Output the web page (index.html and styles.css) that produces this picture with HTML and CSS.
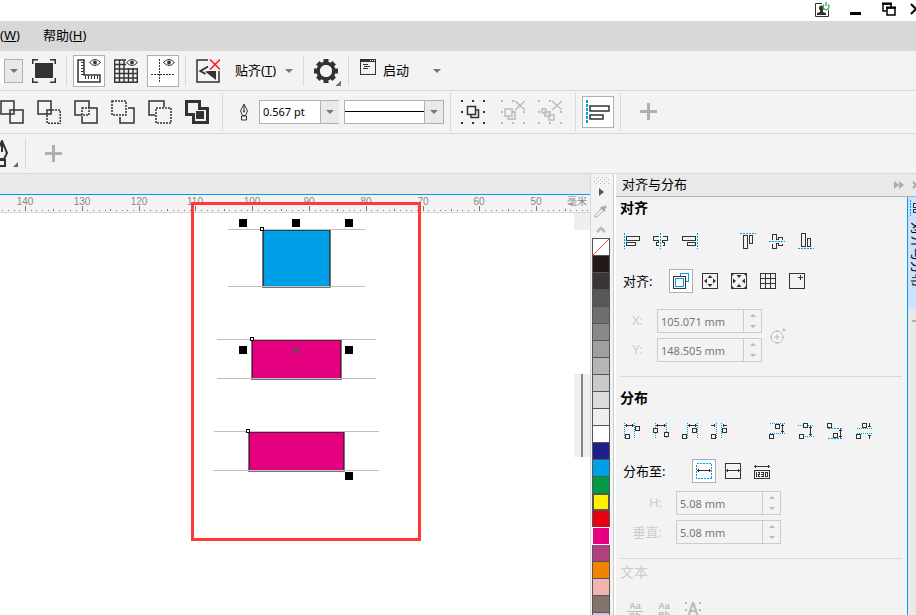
FILE: index.html
```html
<!DOCTYPE html>
<html lang="zh-CN">
    <head>
        <meta charset="utf-8">
        <title>对齐与分布</title>
        <link rel="stylesheet" href="styles.css">
    </head>
    <body>
        <header class="titlebar">
            <button class="win" aria-label="登录"><svg width="16" height="16" viewBox="0 0 16 16"><path d="M8 1.500H1.500v13h13V8" fill="none" stroke="#333"/><path d="M3 13v-2l3-1V8a2 2 0 0 1-1-2 2.500 2.500 0 0 1 5 0 2 2 0 0 1-1 2v2l3 1v2z" fill="#333"/><path d="M10 2.500a3 3 0 1 0 4 0M12 0v4" fill="none" stroke="#2eb35a" stroke-width="1.400"/></svg></button>
            <button class="win" aria-label="最小化"><svg width="16" height="16"><path d="M3 11.500h11" stroke="#000" stroke-width="3" shape-rendering="crispEdges"/></svg></button>
            <button class="win" aria-label="还原"><svg width="16" height="16" fill="#fff" stroke="#000" stroke-width="1.500"><path d="M3 2h8v7H3z"/><path d="M7 6h8v7H7z"/><path d="M2 1.500h10M6 5.500h10" stroke-width="2"/></svg></button>
            <button class="win" aria-label="关闭"><svg width="16" height="16"><path d="M3 2l10 10M13 2L3 12" stroke="#000" stroke-width="2"/></svg></button>
        </header>

        <nav class="menubar">
            <a href="#window">(<u>W</u>)</a>
            <a href="#help">帮助(<u>H</u>)</a>
        </nav>

        <div class="toolbar standard">
            <button class="drop edge" aria-label="缩放级别"><i class="caret"></i></button>
            <button class="tool" aria-label="全屏预览"><svg width="24" height="24" fill="none" stroke="#333"><path d="M.5 5V.5H6M18 .5h5.500V5M.5 19v4.500H6M18 23.500h5.500V19" stroke-width="2"/><path d="M3 4h18v15H3z" fill="#333" stroke="none"/></svg></button>
            <span class="sep"></span>
            <button class="tool on" aria-label="标尺"><svg width="24" height="24" fill="none" stroke="#333"><path d="M1 1h6v15h16v7H1z" stroke-width="1.500"/><path d="M4 3.500h3M4 6.500h3M4 9.500h3M4 12.500h3M4 15.500h3M8.500 17v3M11.500 17v3M14.500 17v3M17.500 17v3M20.500 17v3"/><path d="M12.500 3.500q5.500-6 11 0-5.500 6-11 0z"/><circle cx="18" cy="3.500" r="1.500" fill="#333"/></svg></button>
            <button class="tool" aria-label="网格"><svg width="24" height="24" fill="none" stroke="#333"><path d="M.7 1v22.500M5.500 1v22.500M10 1v22.500M14.500 9v14.500M19 9v14.500M23.300 9v14.500M0 1h12M0 5.500h12M0 10h24M0 14.500h24M0 19h24M0 23.300h24" stroke-width="1.400"/><path d="M12.500 3.500q5.500-6 11 0-5.500 6-11 0z" fill="#f3f3f3"/><circle cx="18" cy="3.500" r="1.500" fill="#333"/></svg></button>
            <button class="tool on" aria-label="辅助线"><svg width="24" height="24" fill="none" stroke="#333"><path d="M8.500 0v24M0 15.500h24" stroke-dasharray="2 1" shape-rendering="crispEdges"/><path d="M12.500 3.500q5.500-6 11 0-5.500 6-11 0z"/><circle cx="18" cy="3.500" r="1.500" fill="#333"/></svg></button>
            <span class="sep"></span>
            <button class="tool" aria-label="关闭贴齐"><svg width="24" height="24" fill="none" stroke="#333"><path d="M12 1H1v22h22V12" stroke-width="1.500"/><path d="M12 7.500L4.500 12l5 3" stroke-width="2"/><path d="M9 12.500l5-.5h6v9z" fill="#333" stroke="none"/><path d="M14 .5l10 10M24 .5l-10 10" stroke="#f22" stroke-width="1.600"/></svg></button>
            <button class="text-tool">贴齐(<u>T</u>)<i class="caret"></i></button>
            <span class="sep"></span>
            <button class="tool flyout" aria-label="选项"><svg width="24" height="24" viewBox="-12 -12 24 24"><circle r="7.800" fill="none" stroke="#333" stroke-width="3.500"/><path d="M0-8v-4M0 8v4M-8 0h-4M8 0h4M5.700-5.700l2.500-2.500M5.700 5.700l2.500 2.500M-5.700-5.700l-2.500-2.500M-5.700 5.700l-2.500 2.500" stroke="#333" stroke-width="5"/><circle r="6" fill="#f3f3f3"/></svg></button>
            <span class="sep"></span>
            <button class="text-tool launch"><svg width="16" height="16" fill="none" stroke="#333" shape-rendering="crispEdges"><path d="M.5.5h15v15H.5z"/><path d="M0 1.500h16" stroke-width="3"/><path d="M10 1.500h1M12 1.500h1M14 1.500h1" stroke="#fff"/><path d="M3 5.500h5M4 7.500h6M3 9.500h5"/></svg>启动<i class="caret"></i></button>
        </div>

        <div class="toolbar shaping">
            <button class="tool" aria-label="焊接"><svg width="24" height="24" fill="#f3f3f3" stroke="#333" stroke-width="1.500"><path d="M1 1h13v13H1zM10 10h13v13H10z"/></svg></button>
            <button class="tool" aria-label="修剪"><svg width="24" height="24" fill="none" stroke="#333" stroke-width="1.500"><path d="M14 10V1H1v13h9"/><path d="M10 10h4v4h-4z"/><path d="M15 10h9M23.300 11v13M10 15v9M11 23.300h12" stroke-dasharray="2 1"/></svg></button>
            <button class="tool" aria-label="相交"><svg width="24" height="24" fill="none" stroke="#333" stroke-width="1.500"><path d="M15 8V1H1v14h7"/><path d="M16 8h7v15H8v-7"/><path d="M8 8h7v7H8z" stroke-dasharray="2 1"/></svg></button>
            <button class="tool" aria-label="简化"><svg width="24" height="24" fill="none" stroke="#333" stroke-width="1.500"><path d="M1 1h14v14H1z" stroke-dasharray="2 1"/><path d="M17 8h6v15H9v-6"/></svg></button>
            <button class="tool" aria-label="移除后面对象"><svg width="24" height="24" fill="none" stroke="#333" stroke-width="1.500"><path d="M16 7V1H1v14h6"/><path d="M8 8h15v15H8z" stroke-dasharray="2 1"/></svg></button>
            <button class="tool" aria-label="创建边界"><svg width="24" height="24" fill="none" stroke="#333" stroke-width="3"><path d="M1.500 1.500h13v7h8v14h-14v-8h-7z"/><path d="M11 11h8v8h-8z" fill="#333" stroke="none"/></svg></button>
            <span class="sep tall after-shapes"></span>
            <label class="pen" for="outline-width" title="轮廓宽度"><svg width="10" height="18" fill="none" stroke="#333"><path d="M5 1L1.500 8l2 4.500h3l2-4.500zM5 2v6M2.500 13h5v4h-5z"/><circle cx="5" cy="8.500" r=".7"/></svg></label>
            <div class="combo">
                <input id="outline-width" type="text" value="0.567 pt">
                <button class="drop" aria-label="轮廓宽度列表"><i class="caret"></i></button>
            </div>
            <div class="combo line-style">
                <select aria-label="线条样式"><option></option></select>
                <span class="drop"><i class="caret"></i></span>
            </div>
            <span class="sep tall"></span>
            <button class="tool" aria-label="组合对象"><svg width="24" height="24" fill="none" stroke="#333"><path d="M0 1h24M0 12h24M0 23h24" stroke-width="2" stroke-dasharray="2 9"/><path d="M10 10v7.500h7.500V10z" stroke-width="1.500"/><path d="M6.500 6.500h8v8h-8z" fill="#f3f3f3" stroke-width="1.500"/></svg></button>
            <button class="tool ungroup" aria-label="取消组合对象" disabled><svg width="24" height="24" fill="none" stroke="#bbb"><path d="M0 1h13M0 12h24M0 23h24" stroke-width="2" stroke-dasharray="2 9"/><path d="M7 12v7h7v-7z" stroke-width="1.500"/><path d="M4 9h7v7H4z" fill="#f3f3f3" stroke-width="1.500"/><path d="M14 1l10 9M24 1l-10 9" stroke-width="1.500"/></svg></button>
            <button class="tool" aria-label="取消组合所有对象" disabled><svg width="24" height="24" fill="#f3f3f3" stroke="#bbb"><path d="M0 1h13M0 12h24M0 23h24" stroke-width="2" stroke-dasharray="2 9"/><path d="M4 9h4v4H4zM7 12h5v4H7zM11 15h5v5h-5z" stroke-width="1.500"/><path d="M14 1l10 9M24 1l-10 9" stroke-width="1.500"/></svg></button>
            <span class="sep tall wide"></span>
            <button class="tool on" aria-label="对齐与分布"><svg width="24" height="24" fill="none" stroke="#333" stroke-width="2"><path d="M1 0v24" stroke="#00a0e9" stroke-dasharray="3 1" shape-rendering="crispEdges"/><path d="M4 6h19v5H4zM4 15h13v4H4z" stroke-width="1.500"/></svg></button>
            <span class="sep tall"></span>
            <button class="add" aria-label="添加"></button>
        </div>

        <div class="toolbar property">
            <button class="nib" aria-label="钢笔"><svg width="19" height="28" fill="none" stroke="#333" stroke-width="2"><path d="M2 1L-4 13l3 6h5l3-6zM2 3v9M-2 20h7v6h-7z"/><path d="M18 22v5h-5z" fill="#666" stroke="none"/></svg></button>
            <span class="sep"></span>
            <button class="add" aria-label="添加"></button>
        </div>

        <main class="workspace">
            <section class="document">
                <div class="doc-tabs"></div>
                <div class="ruler">
                    <svg id="ruler" width="100%" height="17"></svg>
                    <span class="unit">毫米</span>
                </div>
                <div class="page">
                    <svg class="drawing" width="400" height="340" shape-rendering="crispEdges">
                        <!-- outlined boxes with their guide lines -->
                        <path d="M262 17h69v58h-69z" fill="#777"/>
                        <path d="M263 17h67v57h-67z" fill="#1d4657"/>
                        <path d="M264 18h65v56h-65z" fill="#00a0e9"/>
                        <path d="M251 127h91v40h-91z" fill="#777"/>
                        <path d="M252 127h89v39h-89z" fill="#6b1040"/>
                        <path d="M253 128h87v38h-87z" fill="#e4007f"/>
                        <path d="M248 219h97v40h-97z" fill="#777"/>
                        <path d="M249 219h95v39h-95z" fill="#6b1040"/>
                        <path d="M250 220h93v38h-93z" fill="#e4007f"/>
                        <path d="M228 16.500h137M228 73.500h137M217 126.500h159M217 165.500h159M214 218.500h165M213 257.500h166" stroke="#bfbfbf"/>
                        <path d="M260.500 14.500h3v3h-3zM250.500 124.500h3v3h-3zM246.500 216.500h3v3h-3z" fill="#fff" stroke="#000"/>
                        <path d="M239 6h8v8h-8zM292 6h8v8h-8zM345 6h8v8h-8zM239 133h8v8h-8zM345 133h8v8h-8zM345 259h8v8h-8z"/>
                        <path d="M293 134l6 6M299 134l-6 6" stroke="#555" stroke-width="1.500" shape-rendering="auto"/>
                    </svg>
                    <div class="scroll"><span class="scroll-top"></span><span class="thumb"></span></div>
                </div>
                <div class="highlight"></div>
            </section>

            <aside class="palette">
                <svg width="17" height="9" shape-rendering="crispEdges" stroke="#bbb"><path d="M1 2.500h16M1 6.500h16" stroke-dasharray="1 3"/><path d="M3 4.500h14M3 8.500h14" stroke-dasharray="1 3"/></svg>
                <button class="pal" aria-label="调色板菜单"><svg width="16" height="16"><path d="M6 4l5 4-5 4z" fill="#555"/></svg></button>
                <button class="pal" aria-label="滴管"><svg width="16" height="16" stroke="#aaa" fill="none"><path d="M9 5L2.500 11.500 2 14l2.500-.5L11 7"/><path d="M8 4l4 4M10.500 5.500L13 3" stroke-width="2.500"/></svg></button>
                <button class="pal" aria-label="向上滚动"><svg width="16" height="16"><path d="M4 10l4-4 4 4" fill="none" stroke="#bbb" stroke-width="2.500"/></svg></button>
                <div class="swatches" id="swatches"></div>
            </aside>

            <aside class="docker">
                <div class="docker-title">
                    <span>对齐与分布</span>
                    <button class="pal" aria-label="折叠"><svg width="16" height="16" fill="#aaa"><path d="M3 4l5 4-5 4zM8 4l5 4-5 4z"/></svg></button>
                    <button class="pal" aria-label="关闭泊坞窗"><svg width="16" height="16" stroke="#aaa" stroke-width="2"><path d="M3 5l6 6M9 5l-6 6"/></svg></button>
                </div>
                <div class="docker-main">
                    <div class="docker-body">
                        <section>
                            <h2>对齐</h2>
                            <div class="icons">
                                <button aria-label="左对齐"><svg width="16" height="16"><path class="guide" d="M.5 0v16"/><path d="M2.500 3.500h13v4h-13zM2.500 9.500h9v3h-9z"/></svg></button>
                                <button aria-label="水平居中对齐"><svg width="16" height="16"><path d="M5.500 3.500h-5v4h5v2h-2v3h2M9.500 3.500h5v4h-5v2h2v3h-2"/><path class="guide" d="M7.500 0v16"/></svg></button>
                                <button aria-label="右对齐"><svg width="16" height="16"><path class="guide" d="M15.500 0v16"/><path d="M.5 3.500h13v4H.5zM5.500 9.500h8v3h-8z"/></svg></button>
                                <button class="apart" aria-label="顶端对齐"><svg width="16" height="16"><path class="guide" d="M0 .5h16"/><path d="M3.500 2.500h4v13h-4zM9.500 2.500h3v8h-3z"/></svg></button>
                                <button aria-label="垂直居中对齐"><svg width="16" height="16"><path d="M3.500 6.500v-5h4v5h2v-2h4v2M3.500 10.500v5h4v-5h2v2h4v-2"/><path class="guide" d="M0 8.500h16"/></svg></button>
                                <button aria-label="底端对齐"><svg width="16" height="16"><path class="guide" d="M0 15.500h16"/><path d="M3.500.5h4v13h-4zM9.500 5.500h3v8h-3z"/></svg></button>
                            </div>
                            <div class="icons target">
                                <span class="label">对齐:</span>
                                <button class="on" aria-label="活动对象"><svg width="16" height="16"><path class="blue" d="M7.500 3.500v-3h8v8h-3"/><path d="M.5 3.500h12v12H.5z"/><path class="blue" d="M2.500 5.500h8v8h-8z"/></svg></button>
                                <button aria-label="页面边缘"><svg width="16" height="16"><path d="M.5.5h15v15H.5z"/><path class="solid" d="M8 2l2.500 3h-5zM8 14l2.500-3h-5zM2 8l3-2.500v5zM14 8l-3-2.500v5z"/></svg></button>
                                <button aria-label="页面中心"><svg width="16" height="16"><path d="M.5.5h15v15H.5z"/><path class="solid" d="M8 5L5.500 2h5zM8 11l-2.500 3h5zM5 8L2 5.500v5zM11 8l3-2.500v5zM1 1h2L1 3zM15 1h-2l2 2zM1 15h2l-2-2zM15 15h-2l2-2z"/></svg></button>
                                <button aria-label="网格"><svg width="16" height="16"><path d="M.5.5h15v15H.5zM5.500 0v16M10.500 0v16M0 5.500h16M0 10.500h16"/></svg></button>
                                <button aria-label="指定点"><svg width="16" height="16"><path d="M.5.5h15v15H.5zM11.500 2v5M9 4.500h5"/></svg></button>
                            </div>
                            <div class="fields point">
                                <label for="pos-x">X:</label>
                                <div class="spin"><input id="pos-x" type="text" value="105.071 mm" disabled><span class="steps"><button aria-label="增加 X" disabled></button><button class="down" aria-label="减少 X" disabled></button></span></div>
                                <button class="pick" aria-label="指定点位置" disabled><svg width="20" height="20" fill="none" stroke="#bbb"><circle cx="8" cy="11" r="6"/><path d="M8 4v2M8 16v2M1 11h2M13 11h2M5 11h6M8 8v6"/><path d="M14 2l3 2-3 2z" fill="#bbb" stroke="none"/></svg></button>
                                <label for="pos-y">Y:</label>
                                <div class="spin"><input id="pos-y" type="text" value="148.505 mm" disabled><span class="steps"><button aria-label="增加 Y" disabled></button><button class="down" aria-label="减少 Y" disabled></button></span></div>
                            </div>
                        </section>

                        <section class="distribute">
                            <h2>分布</h2>
                            <div class="icons">
                                <button aria-label="左分散排列"><svg width="16" height="16"><path class="dots" d="M.5 0v16M10.500 0v16"/><path d="M1 2.500h9M2.500 1v3M8.500 1v3M1.500 11.500h4v4h-4zM11.500 3.500h4v4h-4z"/></svg></button>
                                <button aria-label="水平分散排列中心"><svg width="16" height="16"><path class="dots" d="M2.500 0v5M2.500 10v6M13.500 0v9M13.500 14v2"/><path d="M3 2.500h10M4.500 1v3M11.500 1v3M.5 5.500h4v4h-4zM11.500 9.500h4v4h-4z"/></svg></button>
                                <button aria-label="右分散排列"><svg width="16" height="16"><path class="dots" d="M5.500 0v16M15.500 0v16"/><path d="M6 2.500h9M7.500 1v3M13.500 1v3M.5 11.500h4v4h-4zM10.500 5.500h4v4h-4z"/></svg></button>
                                <button aria-label="水平分散排列间距"><svg width="16" height="16"><path class="dots" d="M5.500 0v16M10.500 0v16"/><path d="M0 2.500h4M3.500 1v3M12 2.500h4M12.500 1v3M.5 11.500h4v4h-4zM11.500 5.500h4v4h-4z"/></svg></button>
                                <button class="apart" aria-label="顶部分散排列"><svg width="16" height="16"><path class="dots" d="M1 .5h15M1 10.500h15"/><path d="M13.500 1v9M12 2.500h3M12 8.500h3M6.500 1.500h4v4h-4zM.5 11.500h4v4h-4z"/></svg></button>
                                <button aria-label="垂直分散排列中心"><svg width="16" height="16"><path class="dots" d="M0 2.500h5M10 2.500h6M7 13.500h9"/><path d="M12.500 3v10M11 4.500h3M11 11.500h3M5.500.5h4v4h-4zM1.500 11.500h4v4h-4z"/></svg></button>
                                <button aria-label="底部分散排列"><svg width="16" height="16"><path class="guide" d="M1 5.500h15M1 15.500h15"/><path d="M13.500 6v9M12 7.500h3M12 13.500h3M.5.5h4v4h-4zM6.500 10.500h4v4h-4z"/></svg></button>
                                <button aria-label="垂直分散排列间距"><svg width="16" height="16"><path class="dots" d="M1 5.500h15M1 10.500h15"/><path d="M13.500 0v4M12 3.500h3M13.500 12v4M12 12.500h3M6.500.5h4v4h-4zM.5 11.500h4v4h-4z"/></svg></button>
                            </div>
                            <div class="icons target">
                                <span class="label wide">分布至:</span>
                                <button class="on" aria-label="选定的范围"><svg width="16" height="16"><path class="guide" d="M.5.5h15v15H.5z"/><path d="M1 7.500h14M2.500 6v3M13.500 6v3"/></svg></button>
                                <button aria-label="页面范围"><svg width="16" height="16"><path d="M.5.5h15v15H.5zM1 7.500h14M2.500 6v3M13.500 6v3"/></svg></button>
                                <button aria-label="对象间距"><svg width="16" height="16"><path d="M0 3.500h16M1.500 2v3M14.500 2v3M.5 7.500h15v8H.5zM2.500 9v5M4 9.500h1.500v2H4.500v2H6M7 9.500h2.500v4H7M7 11.500h2M11.500 9.500h2v4h-2z"/></svg></button>
                            </div>
                            <div class="fields spacing">
                                <label for="dist-h">H:</label>
                                <div class="spin"><input id="dist-h" type="text" value="5.08 mm" disabled><span class="steps"><button aria-label="增加水平间距" disabled></button><button class="down" aria-label="减少水平间距" disabled></button></span></div>
                                <label for="dist-v">垂直:</label>
                                <div class="spin"><input id="dist-v" type="text" value="5.08 mm" disabled><span class="steps"><button aria-label="增加垂直间距" disabled></button><button class="down" aria-label="减少垂直间距" disabled></button></span></div>
                            </div>
                        </section>

                        <section class="text-align">
                            <h2>文本</h2>
                            <div class="icons">
                                <button aria-label="第一条线的基线" disabled><span class="glyph ruled">Aa</span><span class="glyph">Bb</span></button>
                                <button aria-label="最后一条线的基线" disabled><span class="glyph">Aa</span><span class="glyph">Bb</span></button>
                                <button aria-label="边框" disabled><span class="glyph boxed">A</span></button>
                            </div>
                        </section>
                    </div>
                    <div class="side-tabs">
                        <a class="side-tab" href="#align"><svg width="16" height="16" fill="none" stroke="#333" shape-rendering="crispEdges"><path d="M1.500 0v16" stroke="#00a0e9" stroke-dasharray="2 1"/><path d="M4.500 3.500h11v4h-11zM4.500 9.500h7v3h-7z"/></svg><span>对齐与分布</span></a>
                        <button class="side-add" aria-label="添加泊坞窗"></button>
                    </div>
                </div>
            </aside>
        </main>

        <script src="script.js"></script>
    </body>
</html>
```
FILE: styles.css
```css
* {
    box-sizing: border-box;
}
body {
    margin: 0;
    height: 100vh;
    display: flex;
    flex-direction: column;
    overflow: hidden;
    background: #f3f3f3;
    color: #000;
    font: 13px "Noto Sans", "Noto Sans CJK SC", sans-serif;
}
button {
    flex: none;
    margin: 0;
    padding: 0;
    border: 0;
    background: none;
    color: inherit;
    font: inherit;
}
svg {
    display: block;
    flex: none;
}
.titlebar {
    display: flex;
    flex: none;
    justify-content: flex-end;
    gap: 17px;
    height: 21px;
    padding: 2px 0 0;
    background: #fff;
    overflow: hidden;
}
.win {
    width: 16px;
    height: 16px;
}
.win:last-child {
    width: 8px;
    margin-left: -5px;
    overflow: hidden;
}
.menubar {
    display: flex;
    flex: none;
    align-items: center;
    gap: 23px;
    height: 30px;
    padding-bottom: 3px;
    background: #d8d8d8;
}
.menubar a {
    color: #000;
    text-decoration: none;
}
.toolbar {
    display: flex;
    flex: none;
    align-items: center;
    gap: 5px;
    height: 40px;
    border-bottom: 1px solid #d8d8d8;
}
.tool {
    width: 32px;
    height: 32px;
    padding: 3px;
    border: 1px solid transparent;
}
.tool.on {
    background: #fff;
    border-color: #b0b0b0;
}
.sep {
    flex: none;
    width: 1px;
    height: 30px;
    margin: 0 1px;
    background: #d8d8d8;
}
.tall {
    height: 38px;
}
.after-shapes {
    margin-left: 4px;
}
.caret {
    flex: none;
    border: 4px solid transparent;
    border-top-color: #777;
    border-bottom: 0;
}
.drop {
    display: flex;
    flex: none;
    align-items: center;
    justify-content: center;
    width: 19px;
    height: 100%;
    background: #e9e9e9;
    border-left: 1px solid #b0b0b0;
}
.edge {
    height: 24px;
    margin-left: 4px;
    border: 1px solid #b0b0b0;
    box-shadow: -4px 0 #fff;
}
.text-tool {
    display: flex;
    align-items: center;
    height: 32px;
    padding: 0 4px 2px 6px;
}
.text-tool .caret {
    margin: 2px 0 0 9px;
}
.launch {
    gap: 7px;
    padding-left: 5px;
}
.launch svg {
    margin-bottom: 5px;
}
.launch .caret {
    margin-left: 17px;
}
.flyout {
    background: linear-gradient(135deg, transparent 50%, #777 50%) right bottom / 5px 5px no-repeat;
}
.shaping {
    height: 43px;
    padding-bottom: 1px;
}
.shaping > .tool:first-child {
    margin-left: -4px;
}
.pen {
    margin: 0 5px 0 10px;
}
.combo {
    display: flex;
    width: 80px;
    height: 24px;
    background: #fff;
    border: 1px solid #b0b0b0;
}
.combo input {
    width: 60px;
    padding: 0 3px;
    border: 0;
    background: none;
    font: 11px "Noto Sans", sans-serif;
}
.line-style {
    width: 100px;
}
.line-style select {
    width: 80px;
    border: 0;
    appearance: none;
    background: linear-gradient(#000, #000) center / 100% 1px no-repeat;
}
.ungroup {
    margin-left: 3px;
}
.wide.sep {
    margin-left: 4px;
}
.add {
    width: 17px;
    height: 17px;
    margin-left: 13px;
    background:
        linear-gradient(#b0b0b0, #b0b0b0) center / 17px 3px no-repeat,
        linear-gradient(#b0b0b0, #b0b0b0) center / 3px 17px no-repeat;
}
.workspace {
    display: flex;
    flex: 1;
    min-height: 0;
    background: #fff;
}
.document {
    position: relative;
    display: flex;
    flex: 1;
    flex-direction: column;
    min-width: 0;
}
.doc-tabs {
    flex: none;
    height: 21px;
    background: #e9e9e9;
    border-bottom: 1px solid #00a0e9;
}
.ruler {
    display: flex;
    position: relative;
    flex: none;
    height: 18px;
    background: #f3f3f3;
    border-bottom: 1px solid #d8d8d8;
    color: #888;
}
.ruler text {
    fill: #888;
    font: 10px "Liberation Sans", sans-serif;
    text-anchor: middle;
}
.unit {
    position: absolute;
    top: 0;
    right: 3px;
    font-size: 10px;
    line-height: 13px;
}
.page {
    display: flex;
    flex: 1;
    justify-content: space-between;
    min-height: 0;
    overflow: hidden;
}
.scroll {
    display: flex;
    flex-direction: column;
    gap: 144px;
    width: 16px;
}
.scroll-top {
    height: 17px;
    background: #efefef;
}
.thumb {
    height: 83px;
    background: linear-gradient(#888, #888) center / 2px 100% no-repeat #efefef;
}
/* red frame over the ruler and the page */
.highlight {
    position: absolute;
    top: 28px;
    left: 191px;
    width: 230px;
    height: 339px;
    border: 3px solid #ff3838;
}
.palette {
    display: flex;
    flex: none;
    flex-direction: column;
    align-items: center;
    width: 24px;
    padding: 1px 3px 0 1px;
    background: #f3f3f3;
    border-left: 1px solid #d8d8d8;
    border-right: 1px solid #ccc;
    overflow: hidden;
}
.pal {
    width: 16px;
    height: 16px;
}
.palette .pal {
    margin-bottom: 3px;
}
.palette .pal:last-of-type {
    margin-bottom: 0;
}
.swatches {
    display: flex;
    flex: none;
    flex-direction: column;
    gap: 1px;
    width: 18px;
    padding: 1px;
    background: #555;
}
.swatch {
    height: 16px;
}
.current {
    outline: 1px solid #fff;
}
.ringed {
    border: 1px solid #555;
}
.none {
    background: linear-gradient(135deg, #fff 47%, #ff4040 47%, #ff4040 53%, #fff 53%);
}
.docker {
    display: flex;
    flex: none;
    flex-direction: column;
    width: 300px;
    margin-left: 2px;
    background: #f3f3f3;
}
.docker-title {
    display: flex;
    flex: none;
    align-items: center;
    height: 23px;
    padding-left: 6px;
    background: #e9e9e9;
    border-bottom: 1px solid #b0b0b0;
    overflow: hidden;
}
.docker-title span {
    flex: 1;
    padding-bottom: 3px;
}
.docker-title .pal:last-child {
    margin-left: 3px;
    width: 6px;
    overflow: hidden;
}
.docker-main {
    display: flex;
    flex: 1;
    min-height: 0;
}
.docker-body {
    flex: 1;
    min-width: 0;
    padding: 0 5px 0 4px;
    overflow: hidden;
}
section h2 {
    margin: 0 0 9px;
    font-size: 14px;
    line-height: 21px;
    height: 23px;
}
.distribute,
.text-align {
    margin-top: 14px;
    padding-top: 10px;
    border-top: 1px solid #d8d8d8;
}
.text-align {
    padding-top: 2px;
    color: #ccc;
}
.text-align h2 {
    font-weight: normal;
}
.icons {
    display: flex;
    gap: 5px;
    height: 24px;
}
.icons button {
    width: 24px;
    height: 24px;
    padding: 3px;
    border: 1px solid transparent;
}
.icons .on {
    background: #fff;
    border-color: #b0b0b0;
}
.icons svg {
    fill: none;
    stroke: #333;
    shape-rendering: crispEdges;
}
.icons .apart {
    margin-left: 29px;
}
.icons .guide,
.icons .dots,
.icons .blue {
    stroke: #00a0e9;
}
.guide {
    stroke-dasharray: 2 1;
}
.dots {
    stroke-dasharray: 1 1;
}
.solid {
    fill: #333;
    stroke: none;
    shape-rendering: auto;
}
.target {
    align-items: center;
    margin-top: 16px;
}
.label {
    width: 44px;
    padding: 0 0 2px 3px;
}
.label.wide {
    width: 67px;
}
.fields {
    display: grid;
    grid-template-columns: 24px 105px 20px;
    gap: 5px 13px;
    align-items: center;
    margin-top: 16px;
    color: #ccc;
}
.fields label {
    padding: 0 1px 2px 0;
    text-align: right;
    white-space: nowrap;
}
.fields .pick {
    grid-column: 3;
    grid-row: 1 / 3;
    width: 20px;
    height: 20px;
    margin-left: -6px;
}
.spacing {
    grid-template-columns: 43px 105px;
    margin-top: 8px;
}
.spin {
    display: flex;
    height: 24px;
    border: 1px solid #ccc;
}
.spin input {
    flex: 1;
    min-width: 0;
    padding: 0 3px;
    border: 0;
    background: none;
    color: #777;
    font: 11px "Noto Sans", sans-serif;
}
.steps {
    display: flex;
    flex: none;
    flex-direction: column;
    align-items: center;
    justify-content: space-between;
    width: 18px;
    padding: 4px 0;
    border-left: 1px solid #ccc;
}
.steps button {
    width: 6px;
    height: 3px;
    border: 3px solid transparent;
    border-top: 0;
    border-bottom-color: #bbb;
}
.steps .down {
    border-top: 3px solid #bbb;
    border-bottom: 0;
}
.text-align .icons {
    height: 30px;
    padding: 6px 0 0 3px;
}
.text-align button {
    padding: 0;
    color: #bbb;
}
.glyph {
    display: block;
    width: 16px;
    margin: 0 auto;
    font: bold 9px/9px "Liberation Sans", sans-serif;
}
.ruled {
    border-bottom: 1px solid #bbb;
}
.boxed {
    height: 18px;
    font-size: 16px;
    line-height: 16px;
    background:
        linear-gradient(90deg, #bbb 2px, transparent 2px) top left / 7px 2px repeat-x,
        linear-gradient(90deg, #bbb 2px, transparent 2px) 0 7px / 14px 2px repeat-x;
}
.side-tabs {
    flex: none;
    width: 9px;
    background: #e9e9e9;
    border-left: 1px solid #00a0e9;
    overflow: hidden;
}
.side-tab {
    display: block;
    width: 24px;
    height: 112px;
    padding: 3px 0 0 1px;
    background: #cce0ff;
    color: #000;
    text-decoration: none;
}
.side-tab span {
    display: block;
    margin-top: 6px;
    width: 17px;
    line-height: 17px;
    writing-mode: vertical-rl;
    text-orientation: sideways;
}
.side-add {
    display: block;
    width: 17px;
    height: 17px;
    margin: 3px 0 0 4px;
    background: linear-gradient(#b0b0b0, #b0b0b0) center / 17px 2px no-repeat;
}
```
FILE: script.js
```js
var svgNs = 'http://www.w3.org/2000/svg',
    ruler = document.getElementById('ruler'),
    swatches = document.getElementById('swatches'),
    pxPerMm = 5.68,
    firstMm = 144,
    colors = [
        '', '#231916', '#3c3536', '#595757', '#706f6f', '#898989', '#9e9f9f', '#b4b5b5',
        '#c9caca', '#dcdcdc', '#efefef', '#ffffff', '#1d2088', '#00a0e9', '#009944', '#fff100',
        '#e60012', '#e4007f', '#b04080', '#f08300', '#f4b3b3', '#84736a', '#c8c8e6'
    ];

function addTick(mm) {
    var x = Math.round(25 + (140 - mm) * pxPerMm),
        height = mm % 10 === 0 ? 5 : mm % 5 === 0 ? 2 : 1,
        tick = document.createElementNS(svgNs, 'rect'),
        label;

    tick.setAttribute('x', x);
    tick.setAttribute('y', 16 - height);
    tick.setAttribute('width', 1);
    tick.setAttribute('height', height);
    tick.setAttribute('fill', '#777');
    ruler.appendChild(tick);

    if (mm % 10 === 0 && mm > 40) {
        label = document.createElementNS(svgNs, 'text');
        label.setAttribute('x', x);
        label.setAttribute('y', 10);
        label.textContent = mm;
        ruler.appendChild(label);
    }
}

for (var mm = firstMm; mm > 40; mm--) {
    addTick(mm);
}

colors.forEach(function(color) {
    var swatch = document.createElement('button');

    swatch.className = 'swatch';
    swatch.setAttribute('aria-label', color || '无');
    if (color) {
        swatch.style.backgroundColor = color;
    } else {
        swatch.classList.add('none');
    }
    if (color === '#e4007f') {
        swatch.classList.add('current');
    }
    if (color === '#fff100') {
        swatch.classList.add('ringed');
    }
    swatches.appendChild(swatch);
});
```
